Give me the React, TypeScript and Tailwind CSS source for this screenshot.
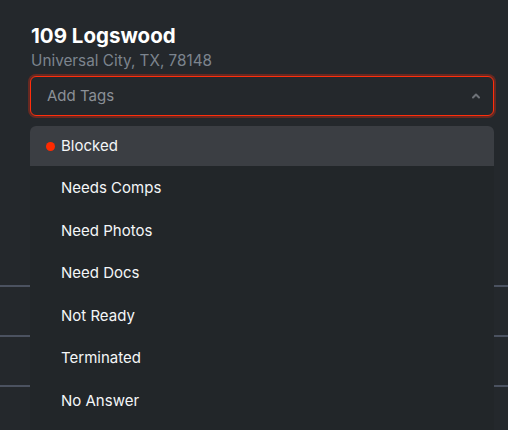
import React from 'react';

const tags = ['Blocked', 'Needs Comps', 'Need Photos', 'Need Docs', 'Not Ready', 'Terminated', 'No Answer'];

export default function App() {
  const [open] = React.useState(true);
  const active = 'Blocked';

  return (
    <div
      className="relative w-[508px] h-[430px] overflow-hidden bg-[#24282c] text-white"
      style={{ fontFamily: 'Inter, "Noto Sans", sans-serif' }}
    >
      {/* Header */}
      <div className="pl-[30px] pr-[14px] pt-[22px]">
        <h2 className="text-[20.5px] leading-7 font-bold text-white pl-px">109 Logswood</h2>
        <p className="text-[15.3px] leading-5 text-[#7c848e] pl-px mt-px">Universal City, TX, 78148</p>

        {/* Tag select */}
        <div className="mt-[5px] h-10 flex items-center justify-between pl-4 pr-3 rounded-md border border-[#ff2e0c] shadow-[0_0_0_2px_rgba(255,46,12,0.3)] bg-[#24282c]">
          <span className="text-[15px] text-[#8b9097]">Add Tags</span>
          <svg width="10" height="10" viewBox="0 0 10 10" fill="none" className="text-[#6e7278]">
            <path d="M2 6.5 L5 3.5 L8 6.5" stroke="currentColor" strokeWidth="2" strokeLinecap="round" strokeLinejoin="round" />
          </svg>
        </div>
      </div>

      {/* Rows behind the menu */}
      <div className="mt-[169px]">
        <div className="h-[50px] border-t-2 border-[#4b5260]" />
        <div className="h-[50px] border-t-2 border-[#4b5260]" />
        <div className="h-[50px] border-t-2 border-[#4b5260]" />
      </div>

      {/* Dropdown menu */}
      {open && (
        <div className="absolute left-[30px] top-[126px] w-[464px] h-[320px] bg-[#222629] rounded-t-md flex flex-col gap-[2.5px]">
          {tags.map((tag) => {
            const isActive = tag === active;
            return (
              <div
                key={tag}
                className={`h-10 shrink-0 flex items-center pl-[16px] text-[15px] text-[#f4f6f8] ${
                  isActive ? 'bg-[#3b3e43] rounded-t-md' : ''
                }`}
              >
                <span className={`w-[9px] h-[9px] rounded-full mr-[6px] ${isActive ? 'bg-[#ff2a00]' : ''}`} />
                <span>{tag}</span>
              </div>
            );
          })}
        </div>
      )}
    </div>
  );
}
